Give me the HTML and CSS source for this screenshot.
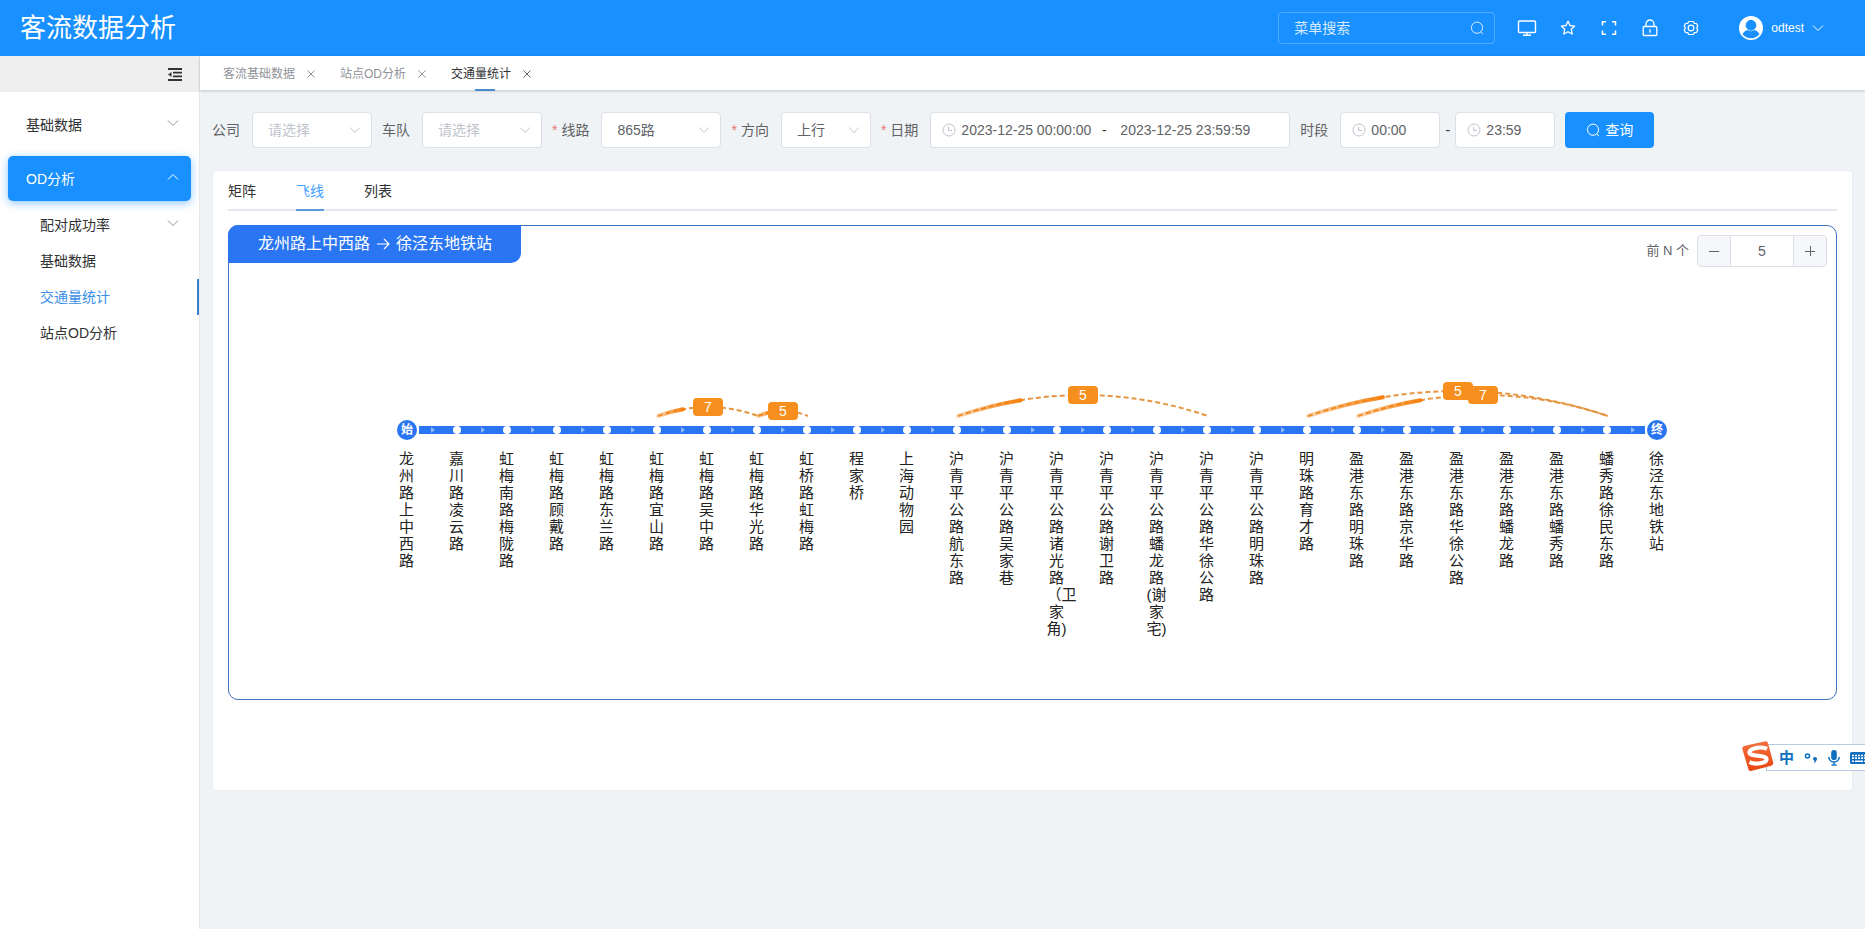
FILE: index.html
```
<!DOCTYPE html>
<html lang="zh-CN">
<head>
<meta charset="utf-8">
<title>客流数据分析</title>
<link rel="stylesheet" href="styles.css">
</head>
<body>
<svg class="defs" aria-hidden="true">
  <symbol id="chevron" viewBox="0 0 12 12"><path d="M1 3.5l5 5 5-5" fill="none" stroke="currentColor" stroke-width="1"/></symbol>
  <symbol id="search" viewBox="0 0 14 14"><circle cx="7" cy="6.7" r="5.6" fill="none" stroke="currentColor"/><path d="M10.6 10.6l2.4 2.6" stroke="currentColor"/></symbol>
  <symbol id="clock" viewBox="0 0 14 14"><circle cx="7" cy="7" r="6" fill="none" stroke="currentColor"/><path d="M6.5 3.5v4h3.5" fill="none" stroke="currentColor"/></symbol>
  <symbol id="close" viewBox="0 0 8 8"><path d="M.5.5l7 7M7.5.5l-7 7" stroke="currentColor" fill="none"/></symbol>
</svg>

<header class="header">
  <h1 class="brand">客流数据分析</h1>
  <div class="menu-search">
    <input class="menu-search-input" type="text" placeholder="菜单搜索" aria-label="菜单搜索">
    <svg class="icon14"><use href="#search"/></svg>
  </div>
  <nav class="tools" aria-label="工具">
    <button class="tool" aria-label="大屏"><svg width="20" height="18" viewBox="0 0 20 18" fill="none" stroke="currentColor" stroke-width="1.4"><rect x="1.5" y="2" width="17" height="11.5" rx="1"/><path d="M10 13.500v2.500M6 16.300h8"/></svg></button>
    <button class="tool" aria-label="收藏"><svg width="16" height="16" viewBox="0 0 16 16" fill="none" stroke="currentColor" stroke-width="1.300" stroke-linejoin="round"><path d="M8 1.200l2 4.300 4.700.6-3.400 3.200.9 4.700L8 11.700 3.800 14l.9-4.700L1.300 6.100 6 5.500z"/></svg></button>
    <button class="tool" aria-label="全屏"><svg width="16" height="16" viewBox="0 0 16 16" fill="none" stroke="currentColor" stroke-width="1.500"><path d="M1.500 5.500V1.800H5M11 1.800h3.500v3.700M14.500 10.500v3.700H11M5 14.200H1.500v-3.700"/></svg></button>
    <button class="tool" aria-label="锁屏"><svg width="16" height="18" viewBox="0 0 16 18" fill="none" stroke="currentColor" stroke-width="1.300"><rect x="1.200" y="7.500" width="13.600" height="9" rx="1"/><path d="M4 7.500V5a4 4 0 0 1 8 0v2.500M8 10.200v3.600"/></svg></button>
    <button class="tool" aria-label="设置"><svg width="16" height="16" viewBox="0 0 16 16" fill="none" stroke="currentColor" stroke-width="1.200" stroke-linejoin="round"><path d="M5.700 1.500h4.600l1 1.900 2.200.1 1.300 2.700L13.600 8l1.200 1.800-1.300 2.700-2.200.1-1 1.900H5.700l-1-1.900-2.200-.1-1.300-2.700L2.400 8 1.200 6.200l1.300-2.700 2.200-.1z"/><circle cx="8" cy="8" r="2.800"/></svg></button>
  </nav>
  <button class="user">
    <svg width="24" height="24" viewBox="0 0 24 24"><circle cx="12" cy="12" r="12" fill="#fff"/><circle cx="12" cy="9.300" r="4.900" fill="#1890ff" stroke="#1890ff"/><path d="M3.500 18.300c1.300-2.500 3.400-3.800 5-4.200 2 1.500 5 1.500 7 0 1.600.4 3.700 1.700 5 4.200-4.500 5.300-12.500 5.300-17 0z" fill="#1890ff"/></svg>
    <span>odtest</span>
    <svg class="icon12"><use href="#chevron"/></svg>
  </button>
</header>

<div class="body">
  <aside class="sidebar">
    <div class="collapse">
      <button class="collapse-btn" aria-label="收起菜单"><svg width="14" height="13" viewBox="0 0 14 13"><path d="M0 1h14M5 4.700h9M5 8.300h9M0 12h14" stroke="#333" stroke-width="1.800"/><path d="M0 6.500L3.500 4v5z" fill="#333"/></svg></button>
    </div>
    <nav class="menu">
      <a class="menu-item" href="#">基础数据<svg class="icon12"><use href="#chevron"/></svg></a>
      <a class="menu-item open" href="#">OD分析<svg class="icon12 flip"><use href="#chevron"/></svg></a>
      <div class="submenu">
        <a class="sub-item" href="#">配对成功率<svg class="icon12"><use href="#chevron"/></svg></a>
        <a class="sub-item" href="#">基础数据</a>
        <a class="sub-item current" href="#">交通量统计</a>
        <a class="sub-item" href="#">站点OD分析</a>
      </div>
    </nav>
  </aside>

  <main class="main">
    <div class="pages">
      <div class="page"><a href="#">客流基础数据</a><button aria-label="关闭"><svg width="8" height="8"><use href="#close"/></svg></button></div>
      <div class="page"><a href="#">站点OD分析</a><button aria-label="关闭"><svg width="8" height="8"><use href="#close"/></svg></button></div>
      <div class="page on"><a href="#">交通量统计</a><button aria-label="关闭"><svg width="8" height="8"><use href="#close"/></svg></button></div>
    </div>

    <form class="filters">
      <div class="field"><label for="company">公司</label><div class="select"><select id="company" class="empty"><option>请选择</option></select><svg class="icon12"><use href="#chevron"/></svg></div></div>
      <div class="field"><label for="fleet">车队</label><div class="select"><select id="fleet" class="empty"><option>请选择</option></select><svg class="icon12"><use href="#chevron"/></svg></div></div>
      <div class="field"><label class="required" for="line">线路</label><div class="select"><select id="line"><option>865路</option></select><svg class="icon12"><use href="#chevron"/></svg></div></div>
      <div class="field"><label class="required" for="dir">方向</label><div class="select short"><select id="dir"><option>上行</option></select><svg class="icon12"><use href="#chevron"/></svg></div></div>
      <div class="field"><label class="required" for="from">日期</label><div class="box range"><svg class="icon14"><use href="#clock"/></svg><input id="from" type="text" value="2023-12-25 00:00:00"><span>-</span><input type="text" aria-label="结束日期" value="2023-12-25 23:59:59"></div></div>
      <div class="field"><label for="t1">时段</label><div class="box time"><svg class="icon14"><use href="#clock"/></svg><input id="t1" type="text" value="00:00"></div><span class="dash">-</span><div class="box time"><svg class="icon14"><use href="#clock"/></svg><input type="text" aria-label="结束时段" value="23:59"></div></div>
      <button class="query" type="button"><svg class="icon14"><use href="#search"/></svg>查询</button>
    </form>

    <section class="card">
      <div class="views" role="tablist">
        <button class="view" role="tab">矩阵</button>
        <button class="view on" role="tab" aria-selected="true">飞线</button>
        <button class="view" role="tab">列表</button>
      </div>
      <div class="panel">
        <div class="panel-head">
          <h2 class="route">龙州路上中西路<svg width="14" height="14" viewBox="0 0 14 14" fill="none" stroke="currentColor" stroke-width="1.200"><path d="M1 7h12M8 2l5 5-5 5"/></svg>徐泾东地铁站</h2>
          <div class="top-n">
            <label for="topn">前 N 个</label>
            <div class="stepper"><button aria-label="减少"><svg width="10" height="10"><path d="M0 5.500h10" stroke="currentColor"/></svg></button><input id="topn" type="text" value="5"><button aria-label="增加"><svg width="10" height="10"><path d="M0 5.500h10M5.500 0v10" stroke="currentColor"/></svg></button></div>
          </div>
        </div>
        <div class="chart">
          <svg id="flow" width="1300" height="80" viewBox="0 0 1300 80"></svg>
          <ol class="stops" id="stops"></ol>
        </div>
      </div>
    </section>
  </main>
</div>

<div class="ime">
  <svg class="ime-logo" width="34" height="32" viewBox="0 0 34 32">
    <defs><linearGradient id="ime-red" x1="0" y1="0" x2="0" y2="1"><stop offset="0" stop-color="#f4713f"/><stop offset="1" stop-color="#e8450f"/></linearGradient></defs>
    <path d="M3 6L24.500 1.200Q26.500 1 27 3L32.200 22.500Q32.500 25 30.300 25.800L10 31Q8 31.200 7.500 29.500L1.300 9Q1 6.800 3 6z" fill="url(#ime-red)"/>
    <path d="M26 8.800C21 6.200 9.500 7.800 8.500 12.200 7.800 17 25 14.500 25.500 19 25.800 23.500 14 24.800 8.500 22.200" fill="none" stroke="#fff" stroke-width="4.200"/>
  </svg>
  <span class="ime-mode">中</span>
  <svg width="14" height="14" viewBox="0 0 14 14"><circle cx="3.500" cy="5" r="2" fill="none" stroke="#0f6fc0" stroke-width="1.600"/><path d="M9 7.500a2 2 0 1 1 3.500 1.800Q12 11.500 9.500 12.500 11 11 10.500 9.800 9 9.300 9 7.500z" fill="#0f6fc0"/></svg>
  <svg width="12" height="16" viewBox="0 0 12 16"><rect x="3.200" y="0" width="5.600" height="10" rx="2.800" fill="#0f6fc0"/><path d="M.8 7c0 6.600 10.400 6.600 10.400 0M6 12v2M3.500 15h5" fill="none" stroke="#0f6fc0" stroke-width="1.600"/></svg>
  <svg width="18" height="12" viewBox="0 0 18 12"><rect x="0" y="0" width="18" height="12" rx="1.500" fill="#0f6fc0"/><path d="M2 3.500h14M2 6.200h14" stroke="#fff" stroke-width="1.700" stroke-dasharray="2 1"/><path d="M2 9.200h2M5 9.200h8M14 9.200h2" stroke="#fff" stroke-width="1.600"/></svg>
</div>
<script src="chart.js"></script>
</body>
</html>
```
FILE: styles.css
```
* { box-sizing: border-box; }
body {
  margin: 0;
  min-height: 100vh;
  display: flex;
  flex-direction: column;
  position: relative;
  overflow: hidden;
  background: #eff3f5;
  color: #303133;
  font: 14px/20px "Liberation Sans", "Noto Sans CJK SC", sans-serif;
}
button, input, select { font: inherit; color: inherit; margin: 0; padding: 0; border: 0; background: none; outline: 0; }
button { display: flex; align-items: center; justify-content: center; cursor: pointer; }
a { color: inherit; text-decoration: none; }
svg { display: block; flex: none; }
.defs { display: none; }
.icon12 { width: 12px; height: 12px; }
.icon14 { width: 14px; height: 14px; }

.header { display: flex; align-items: center; height: 56px; padding: 0 41px 0 20px; background: #1890ff; color: #fff; }
.brand { flex: 1; margin: 0; font-size: 26px; line-height: 36px; font-weight: 400; }
.menu-search { display: flex; align-items: center; width: 217px; height: 32px; padding: 0 10px 0 15px; border: 1px solid #51abff; border-radius: 4px; color: #d6ebff; }
.menu-search-input { flex: 1; min-width: 0; }
.menu-search-input::placeholder { color: #d6ebff; opacity: 1; }
.tools { display: flex; margin-left: 11px; }
.tool { width: 41px; height: 32px; }
.user { gap: 8px; margin-left: 28px; font-size: 12px; font-weight: 500; }

.body { flex: 1; display: flex; }
.sidebar { flex: none; width: 200px; background: #fff; border-right: 1px solid #e6e9eb; }
.collapse { display: flex; justify-content: flex-end; height: 36px; padding-right: 17px; background: #efefef; }
.menu { padding-top: 10px; }
.menu-item { display: flex; align-items: center; justify-content: space-between; height: 45px; margin: 0 8px 9px; padding: 0 12px 0 18px; border-radius: 5px; }
.menu-item svg, .sub-item svg { margin-bottom: 4px; color: #909399; }
.menu-item.open { margin-bottom: 6px; background: #1890ff; color: #fff; box-shadow: 0 2px 8px rgba(24, 144, 255, .5); }
.menu-item.open svg { color: #fff; }
.flip { transform: rotate(180deg); }
.sub-item { display: flex; align-items: center; justify-content: space-between; height: 36px; padding: 0 18px 0 40px; border-right: 2px solid transparent; }
.sub-item.current { color: #3a8ee6; border-color: #3a82d0; }

.main { flex: 1; min-width: 0; }
.pages { display: flex; gap: 25px; height: 34px; padding-left: 23px; background: #fff; box-shadow: 0 1px 3px rgba(0, 0, 0, .2); font-size: 12px; color: #909399; }
.page { position: relative; display: flex; align-items: center; gap: 12px; padding-top: 2px; }
.page button { width: 8px; height: 20px; }
.page.on { color: #303133; }
.page.on button { color: #606266; }
.page.on::after { content: ""; position: absolute; left: 24px; bottom: -1px; width: 20px; height: 2px; background: #4a8bcb; }

.filters { display: flex; align-items: center; flex-wrap: wrap; gap: 10px; padding: 22px 12px; color: #606266; }
.field { display: flex; align-items: center; }
.field label { margin-right: 12px; }
.required::before { content: "*"; margin-right: 4px; color: #e87373; }
.select { position: relative; width: 120px; }
.select.short { width: 90px; }
.select select, .box { height: 36px; border: 1px solid #dcdfe6; border-radius: 4px; background: #fff; }
.select select { display: block; width: 100%; padding: 0 15px; appearance: none; }
.select .empty { color: #c0c4cc; }
.select svg { position: absolute; right: 11px; top: 12px; color: #c0c4cc; pointer-events: none; }
.box { display: flex; align-items: center; padding-left: 11px; }
.box svg { color: #c0c4cc; margin-right: 5px; }
.box input { min-width: 0; flex: 1; }
.range { width: 360px; }
.range input { flex: none; width: 132px; }
.range span { width: 22px; text-align: center; margin-right: 5px; color: #303133; }
.time { width: 100px; padding-right: 10px; }
.dash { width: 15px; text-align: center; color: #303133; }
.query { gap: 5px; width: 89px; height: 36px; border-radius: 4px; background: #1890ff; color: #fff; }

.card { margin: 0 12px; padding: 10px 15px 90px; border: 1px solid #e8ecf0; border-radius: 4px; background: #fff; }
.views { display: flex; gap: 40px; border-bottom: 2px solid #e4e7ed; margin-bottom: 14px; }
.view { height: 30px; padding-bottom: 8px; margin-bottom: -2px; border-bottom: 2px solid transparent; }
.view.on { color: #409eff; border-color: #5a9ad6; }
.panel { border: 1px solid #3d74bd; border-radius: 10px; padding-bottom: 62px; }
.panel-head { display: flex; justify-content: space-between; align-items: flex-start; }
.route { display: flex; align-items: center; gap: 6px; height: 38px; margin: -1px 0 0 -1px; padding: 0 29px 0 30px; border-radius: 10px 0 10px 0; background: #2a75f2; color: #fff; font-size: 16px; font-weight: 400; }
.top-n { display: flex; align-items: center; gap: 8px; padding: 9px 9px 0 0; color: #606266; }
.top-n label { font-size: 13px; }
.stepper { display: flex; width: 130px; height: 32px; border: 1px solid #dcdfe6; border-radius: 4px; overflow: hidden; }
.stepper button { flex: none; width: 32px; background: #f5f7fa; }
.stepper input { flex: 1; min-width: 0; text-align: center; border: solid #dcdfe6; border-width: 0 1px; }

.chart { display: flex; flex-direction: column; align-items: center; padding: 103px 2px 0 0; }
.stops { display: flex; width: 1300px; margin: 0; padding: 0; list-style: none; font-size: 15px; line-height: 17px; text-align: center; color: #222; }
.stops li { flex: none; width: 50px; padding: 0 15px; }
.line { fill: #2a75f2; }
.dot { fill: #fff; }
.arrow { fill: #8db8fb; }
.end { fill: #2a75f2; stroke: #fff; stroke-width: 2px; }
.arc { fill: none; stroke: #e59440; stroke-width: 2; stroke-dasharray: 5 3; }
.trail { fill: none; stroke-width: 4; stroke-linecap: round; }
.badge { fill: #f78f1e; }
.badge-text, .end-text { fill: #fff; text-anchor: middle; font-size: 14px; }
.end-text { font-size: 12px; font-weight: 700; }

.ime { position: absolute; right: -4px; top: 744px; display: flex; align-items: center; gap: 10px; height: 27px; width: 103px; padding-left: 12px; border: 1px solid #b5cbe2; background: #fff; }
.ime-logo { position: absolute; left: -26px; top: -5px; }
.ime-mode { color: #0f6fc0; font-size: 15px; font-weight: 700; }
```
FILE: chart.js
```
const names = [
  "龙州路上中西路", "嘉川路凌云路", "虹梅南路梅陇路", "虹梅路顾戴路", "虹梅路东兰路",
  "虹梅路宜山路", "虹梅路吴中路", "虹梅路华光路", "虹桥路虹梅路", "程家桥", "上海动物园",
  "沪青平公路航东路", "沪青平公路吴家巷", "沪青平公路诸光路（卫家角)", "沪青平公路谢卫路",
  "沪青平公路蟠龙路(谢家宅)", "沪青平公路华徐公路", "沪青平公路明珠路", "明珠路育才路",
  "盈港东路明珠路", "盈港东路京华路", "盈港东路华徐公路", "盈港东路蟠龙路", "盈港东路蟠秀路",
  "蟠秀路徐民东路", "徐泾东地铁站"
];
// from, to: stop indexes; rise: height of the arc
const flows = [
  { from: 5, to: 7, rise: 9, count: 7 },
  { from: 7, to: 8, rise: 5, count: 5 },
  { from: 11, to: 16, rise: 21, count: 5 },
  { from: 18, to: 24, rise: 25, count: 5 },
  { from: 19, to: 24, rise: 21, count: 7 }
];
const STEP = 50, BASE = 46, LINE = 60;
const x = i => STEP / 2 + i * STEP;
const last = names.length - 1;

document.getElementById("stops").innerHTML = names.map(n => `<li>${n}</li>`).join("");

let out = `<rect class="line" x="${x(0) + 12}" y="${LINE - 4}" width="${STEP * last - 24}" height="8"/>`;
for (let i = 0; i <= last; i++) {
  if (i < last) out += `<path class="arrow" d="M${x(i) + 24} ${LINE - 3}l4 3-4 3z"/>`;
  if (i > 0 && i < last) out += `<circle class="dot" cx="${x(i)}" cy="${LINE}" r="4"/>`;
}
[[0, "始"], [last, "终"]].forEach(([i, t]) => {
  out += `<circle class="end" cx="${x(i)}" cy="${LINE}" r="11"/><text class="end-text" x="${x(i)}" y="${LINE + 4}">${t}</text>`;
});
flows.forEach((f, k) => {
  const a = x(f.from) + 1, b = x(f.to) + 1, w = b - a;
  out += `<linearGradient id="g${k}" gradientUnits="userSpaceOnUse" x1="${a}" y1="0" x2="${a + w / 4}" y2="0"><stop offset="0" stop-color="#f5820f" stop-opacity=".3"/><stop offset="1" stop-color="#f5820f"/></linearGradient>`;
  out += `<path class="arc" d="M${a} ${BASE}Q${a + w / 2} ${BASE - 2 * f.rise} ${b} ${BASE}"/>`;
  out += `<path class="trail" stroke="url(#g${k})" d="M${a} ${BASE}Q${a + w / 8} ${BASE - f.rise / 2} ${a + w / 4} ${BASE - f.rise * 0.75}"/>`;
});
flows.forEach(f => {
  const cx = (x(f.from) + x(f.to)) / 2 + 1, cy = BASE - f.rise;
  out += `<rect class="badge" x="${cx - 15}" y="${cy - 9}" width="30" height="18" rx="4"/><text class="badge-text" x="${cx}" y="${cy + 5}">${f.count}</text>`;
});
document.getElementById("flow").innerHTML = out;
```
